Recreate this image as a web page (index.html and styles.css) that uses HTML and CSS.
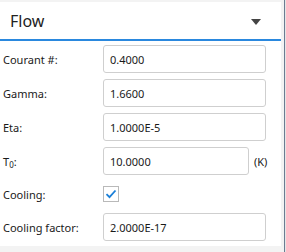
FILE: index.html
```html
<!DOCTYPE html>
<html>
<head>
<meta charset="utf-8">
<link rel="stylesheet" href="styles.css">
</head>
<body>
<div class="window">
  <div class="panel">
    <div class="header">
      <span class="title">Flow</span>
      <svg class="caret" width="10" height="6" viewBox="0 0 10 6"><path d="M0 0H10L5 6Z" fill="#444"/></svg>
    </div>
    <div class="form">
      <div class="row">
        <label class="label">Courant #:</label>
        <div class="field">0.4000</div>
      </div>
      <div class="row">
        <label class="label">Gamma:</label>
        <div class="field">1.6600</div>
      </div>
      <div class="row">
        <label class="label">Eta:</label>
        <div class="field">1.0000E-5</div>
      </div>
      <div class="row">
        <label class="label">T<sub class="sub">0</sub>:</label>
        <div class="field field-short">10.0000</div>
        <span class="unit">(K)</span>
      </div>
      <div class="row row-check">
        <label class="label">Cooling:</label>
        <div class="checkbox">
          <svg width="12" height="10" viewBox="0 0 12 10"><path d="M1.5 5.2L4.5 8.2L10.5 1.5" fill="none" stroke="#1a7fd8" stroke-width="1.8"/></svg>
        </div>
      </div>
      <div class="row">
        <label class="label">Cooling factor:</label>
        <div class="field">2.0000E-17</div>
      </div>
    </div>
  </div>
  <div class="gutter"></div>
  <div class="edge"></div>
  <div class="edge-light"></div>
</div>
</body>
</html>
```
FILE: styles.css
```css
html, body {
  margin: 0;
  padding: 0;
  background: #f3f3f3;
}
body {
  font-family: "Noto Sans", "Open Sans", sans-serif;
  color: #1a1a1a;
  width: 286px;
  height: 252px;
  overflow: hidden;
}
.window {
  display: flex;
  height: 252px;
}
.panel {
  width: 281px;
  margin-top: 2px;
  height: 244px;
  background: #fff;
  flex: none;
}
.gutter {
  width: 3px;
  flex: none;
}
.edge {
  width: 1px;
  background: #6b7c92;
  flex: none;
}
.edge-light {
  width: 1px;
  background: #e6e6e6;
  flex: none;
}
.header {
  height: 37px;
  border-bottom: 2px solid #2a88de;
  display: flex;
  align-items: center;
  justify-content: space-between;
  padding: 0 20px 0 10px;
}
.title {
  font-size: 16px;
  color: #222;
}
.caret {
  display: block;
  margin-top: 2px;
}
.form {
  display: flex;
  flex-direction: column;
  gap: 6px;
  padding: 4px 0 4px 3px;
}
.row {
  display: flex;
  align-items: center;
  height: 28px;
}
.row-check {
  height: 26px;
}
.label {
  width: 100px;
  flex: none;
  font-size: 11px;
  color: #1a1a1a;
}
.sub {
  font-size: 8px;
  vertical-align: -2px;
  line-height: 0;
}
.field {
  box-sizing: border-box;
  width: 163px;
  height: 28px;
  border: 1px solid #cfcfcf;
  border-radius: 3px;
  font-size: 11px;
  color: #1a1a1a;
  display: flex;
  align-items: center;
  padding-left: 6px;
}
.field-short {
  width: 146px;
}
.unit {
  margin-left: 5px;
  font-size: 11px;
  color: #1a1a1a;
}
.checkbox {
  box-sizing: border-box;
  width: 16px;
  height: 16px;
  border: 1px solid #b9b9b9;
  display: flex;
  align-items: center;
  justify-content: center;
  margin-left: 0;
}
.checkbox svg {
  display: block;
}
```
